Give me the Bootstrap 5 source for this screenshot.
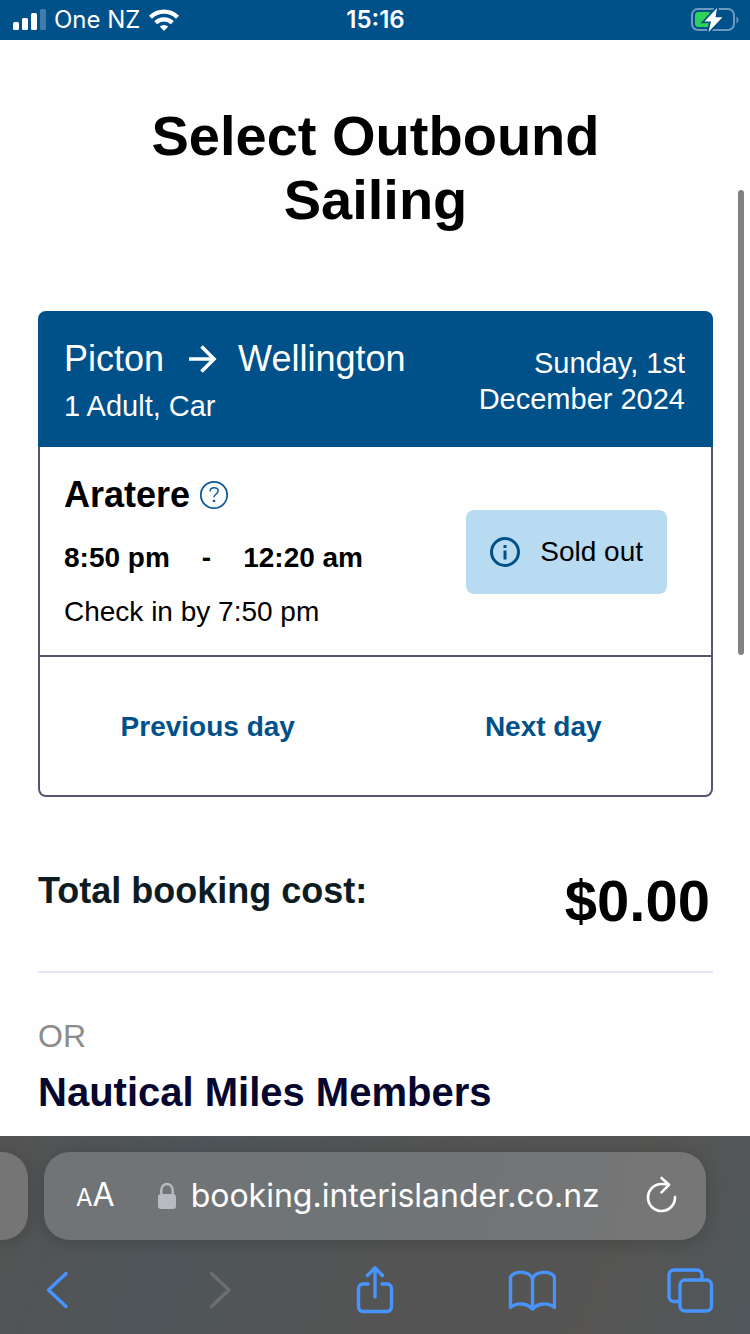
<!DOCTYPE html>
<html lang="en">
<head>
<meta charset="utf-8">
<meta name="viewport" content="width=device-width, initial-scale=1">
<title>Select Outbound Sailing</title>
<link href="https://cdn.jsdelivr.net/npm/bootstrap@5.3.0/dist/css/bootstrap.min.css" rel="stylesheet">
<style>
  :root { --brand: #00508a; --line: #55566d; --ios-blue: #4794ff; }
  body { font-family: "Liberation Sans", Arial, sans-serif; color: #000; background: #fefefe; font-size: 28px; line-height: 36px; }
  svg { display: block; flex: none; }
  .ios { font-family: Inter, "Liberation Sans", sans-serif; }
  .status-bar { background: var(--brand); height: 40px; font-size: 24px; line-height: 40px; padding: 0 11px 0 12px; }
  .status-bar > * { flex: 1 1 0; }
  .page-main { padding: 64px 37px 20px 38px; }
  .page-title { font-size: 56px; line-height: 64px; font-weight: 700; margin: 0 0 79px; padding: 0 80px; }
  .sailing-head { background: var(--brand); border-radius: 8px 8px 0 0; padding: 26px 28px 23px 26px; font-size: 29px; }
  .route { font-size: 36px; line-height: 44px; gap: 21px; margin-bottom: 7px; }
  .sail-date { max-width: 220px; }
  .sailing-body { border: 2px solid var(--line); border-top: 0; padding: 26px 44px 25px 24px; }
  .sailing-nav { border: 2px solid var(--line); border-top: 0; border-radius: 0 0 8px 8px; padding: 52px 0 50px; }
  .sailing-nav a { color: var(--brand); font-weight: 700; }
  .size-36 { font-size: 36px; line-height: 44px; font-weight: 700; }
  .times { gap: 32px; margin: 23px 0 18px; }
  .help-btn { border: 0; background: none; padding: 0; }
  .sold-btn, .sold-btn:disabled { background: #b8dbf1; color: #000; border: 0; border-radius: 8px; padding: 24px; font-size: 28px; line-height: 36px; gap: 20px; opacity: 1; }
  .total-row { padding: 72px 3px 38px 0; border-bottom: 2px solid #e3e3f1; }
  .total-label { color: #0d1c22; }
  .total-price { font-size: 58px; line-height: 64px; font-weight: 700; }
  .or-text { color: #8c8c8c; font-size: 32px; line-height: 40px; margin: 43px 0 12px; }
  .members { color: #06062e; font-size: 40px; line-height: 48px; font-weight: 700; }
  .scroll-thumb { right: 6px; top: 190px; width: 6px; height: 465px; border-radius: 3px; background: #828282; }
  .browser-bar { background: linear-gradient(110deg, #535353 0%, #4f5659 25%, #545454 55%, #565554 80%, #50575a 100%); padding-top: 16px; }
  .tab-row { gap: 16px; padding-right: 44px; }
  .tab-prev { flex: none; width: 28px; border-radius: 0 26px 26px 0; background: #757575; box-shadow: 0 2px 16px #00000030; }
  .address { min-width: 0; height: 88px; border-radius: 26px; background: linear-gradient(100deg, #717476, #6f7477 50%, #777676); box-shadow: 0 2px 16px #00000030; padding: 0 28px 0 32px; }
  .address input { background: none; border: 0; outline: 0; color: #fff; font-size: 32px; line-height: 44px; padding: 0; min-width: 0; width: 0; margin-left: 14px; }
  .address button, .tools button { background: none; border: 0; padding: 0; color: inherit; }
  .text-size { font-size: 32px; line-height: 44px; margin-right: 42px; }
  .text-size span { font-size: 24px; }
  .tools { padding: 26px 36px 20px 33px; color: var(--ios-blue); }
  .tools svg { fill: none; stroke: currentColor; stroke-width: 3.4; stroke-linecap: round; stroke-linejoin: round; }
  .tools button:disabled { color: #6d6e6f; }
</style>
</head>
<body class="min-vh-100 d-flex flex-column position-relative">
<header class="status-bar ios d-flex align-items-center text-white">
  <div class="d-flex align-items-center">
    <svg width="34" height="22" viewBox="0 0 34 22" fill="#fff" aria-hidden="true"><rect x="1" y="13" width="6" height="8" rx="1.5"/><rect x="10" y="9" width="6" height="12" rx="1.5"/><rect x="19" y="4" width="6" height="17" rx="1.5"/><rect x="28" y="0" width="6" height="21" rx="1.5" opacity=".25"/></svg>
    <span class="ms-2 me-2">One NZ</span>
    <svg width="32" height="24" viewBox="0 0 32 24" aria-hidden="true"><g fill="none" stroke="#fff" stroke-width="4.2"><path d="M2.500 9.200a19 19 0 0 1 27 0"/><path d="M7.700 14.800a11.700 11.700 0 0 1 16.600 0"/></g><path d="M11.800 18.600a6.200 6.200 0 0 1 8.400 0L16 23z" fill="#fff"/></svg>
  </div>
  <div class="text-center fw-semibold">15:16</div>
  <div class="d-flex justify-content-end">
    <svg width="48" height="26" viewBox="0 0 48 26" aria-label="Battery charging"><rect x="1" y="2" width="42" height="21" rx="6" fill="none" stroke="#6c9abf" stroke-width="2"/><path d="M45.500 9.500v7q2-1 2-3.500t-2-3.500z" fill="#6c9abf"/><rect x="4" y="5" width="17" height="15" rx="3.500" fill="#30d158"/><path d="M26 1L13.500 14.500h6.500L17.500 25 31.500 10.300H24.500z" fill="#fff" stroke="#00508a" stroke-width="3.500" paint-order="stroke"/></svg>
  </div>
</header>

<main class="page-main flex-grow-1">
  <h1 class="page-title text-center">Select Outbound Sailing</h1>

  <section aria-label="Sailing">
    <div class="sailing-head text-white d-flex justify-content-between align-items-center">
      <div>
        <div class="route d-flex align-items-center">
          <span>Picton</span>
          <svg width="32" height="32" viewBox="0 0 32 32" fill="none" stroke="#fff" stroke-width="3.600" role="img" aria-label="to"><path d="M4 16h25M16.500 3.500L29 16 16.500 28.500"/></svg>
          <span>Wellington</span>
        </div>
        <div>1 Adult, Car</div>
      </div>
      <div class="sail-date text-end">Sunday, 1st December 2024</div>
    </div>
    <div class="sailing-body d-flex justify-content-between align-items-center">
      <div>
        <div class="d-flex align-items-center">
          <h2 class="size-36 mb-0">Aratere</h2>
          <button class="help-btn ms-2" type="button" aria-label="About Aratere"><svg width="30" height="30" viewBox="0 0 30 30" fill="none" stroke="#0b5a9b" stroke-width="1.800"><circle cx="16" cy="15" r="13.200"/><path d="M12 11.500c0-5 8.200-5 8.200-.7 0 3.200-4.200 3.200-4.200 6.500" stroke-width="1.500"/><path d="M16 19.800v2.200" stroke-width="2.400"/></svg></button>
        </div>
        <div class="times d-flex fw-bold"><span>8:50 pm</span><span>-</span><span>12:20 am</span></div>
        <div>Check in by 7:50 pm</div>
      </div>
      <button class="btn sold-btn d-flex align-items-center" type="button" disabled>
        <svg width="30" height="30" viewBox="0 0 30 30" fill="none" stroke="#00508a" stroke-width="3" aria-hidden="true"><circle cx="15" cy="15" r="13.500"/><path d="M15 13.500v9M15 8v3"/></svg>
        <span>Sold out</span>
      </button>
    </div>
    <nav class="sailing-nav d-flex text-center" aria-label="Change day">
      <div class="w-50"><a class="text-decoration-none" href="#previous">Previous day</a></div>
      <div class="w-50"><a class="text-decoration-none" href="#next">Next day</a></div>
    </nav>
  </section>

  <div class="total-row d-flex justify-content-between align-items-start">
    <div class="total-label size-36">Total booking cost:</div>
    <div class="total-price">$0.00</div>
  </div>
  <p class="or-text">OR</p>
  <h2 class="members mb-0">Nautical Miles Members</h2>
</main>
<div class="scroll-thumb position-absolute"></div>

<footer class="browser-bar ios sticky-bottom">
  <div class="tab-row d-flex">
    <div class="tab-prev"></div>
    <div class="address d-flex align-items-center flex-grow-1 text-white">
      <button class="text-size" type="button" aria-label="Text size"><span>A</span>A</button>
      <svg width="20" height="28" viewBox="0 0 20 28" aria-hidden="true"><rect x="1" y="12" width="18" height="15" rx="3" fill="#b9b9c0"/><path d="M4.300 13V8a5.700 6 0 0 1 11.400 0v5" fill="none" stroke="#b9b9c0" stroke-width="2.400"/></svg>
      <input class="flex-grow-1" type="text" value="booking.interislander.co.nz" aria-label="Address" readonly>
      <button type="button" aria-label="Reload"><svg width="34" height="40" viewBox="0 0 34 40" fill="none" stroke="#fff" stroke-width="2.600" stroke-linecap="round" stroke-linejoin="round"><path d="M31 21a13.500 13.500 0 1 1-13.500-13q4 0 7 .800"/><path d="M17.500 2l7.500 6.800-7.500 7.500"/></svg></button>
    </div>
  </div>
  <nav class="tools d-flex justify-content-between" aria-label="Browser">
    <button type="button" aria-label="Back"><svg width="48" height="48" viewBox="0 0 48 48"><path d="M33 7.500L15.500 24 33 40.500"/></svg></button>
    <button type="button" aria-label="Forward" disabled><svg width="48" height="48" viewBox="0 0 48 48"><path d="M20.500 7.500L38 24 20.500 40.500"/></svg></button>
    <button type="button" aria-label="Share"><svg width="48" height="48" viewBox="0 0 48 48"><path d="M18 18h-5a4.500 4.500 0 0 0-4.500 4.500v18.500A4.500 4.500 0 0 0 13 45.500h24a4.500 4.500 0 0 0 4.500-4.500v-18.500A4.500 4.500 0 0 0 37 18h-5M25 31V2M17.500 9.500L25 1.800l7.500 7.700"/></svg></button>
    <button type="button" aria-label="Bookmarks"><svg width="48" height="48" viewBox="0 0 48 48"><path d="M24.500 13C22 4.500 6 4.500 2.500 11v30.500c6-5 16-5 22 1.500 6-6.500 16-6.500 22-1.500V11C43 4.500 27 4.500 24.500 13zv30"/></svg></button>
    <button type="button" aria-label="Tabs"><svg width="48" height="48" viewBox="0 0 48 48"><rect x="14" y="14" width="31.500" height="31" rx="5"/><path d="M13 35.500H8a5 5 0 0 1-5-5V9a5 5 0 0 1 5-5h23a5 5 0 0 1 5 5v4"/></svg></button>
  </nav>
</footer>
<script src="https://cdn.jsdelivr.net/npm/bootstrap@5.3.0/dist/js/bootstrap.bundle.min.js"></script>
</body>
</html>
